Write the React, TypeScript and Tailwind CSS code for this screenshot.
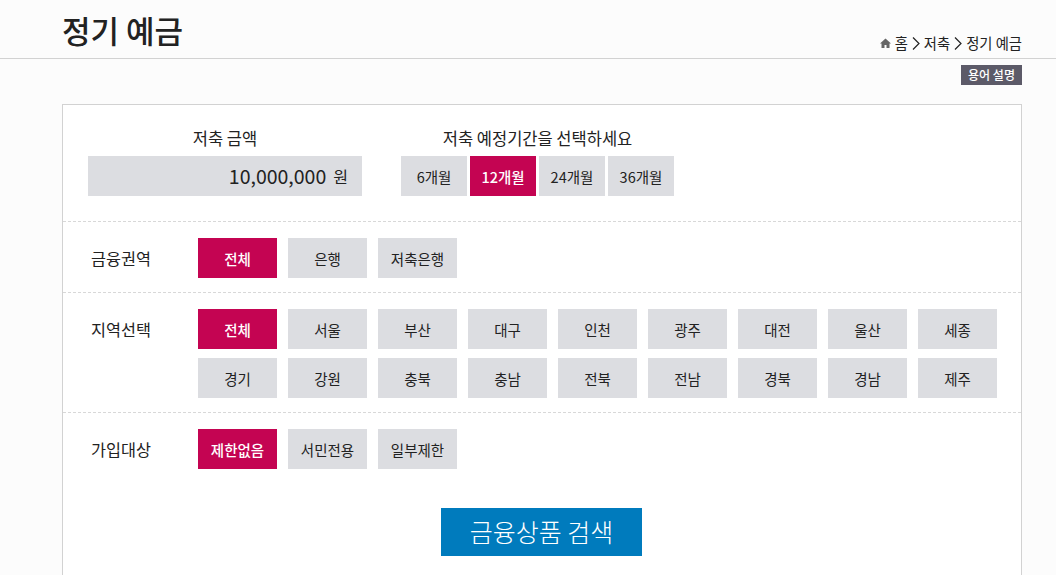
const KR = "font-['Noto_Sans_CJK_KR','Liberation_Sans',sans-serif]";

const PERIODS = ["6개월", "12개월", "24개월", "36개월"];
const AREAS = ["전체", "은행", "저축은행"];
const REGIONS = ["전체", "서울", "부산", "대구", "인천", "광주", "대전", "울산", "세종", "경기", "강원", "충북", "충남", "전북", "전남", "경북", "경남", "제주"];
const TARGETS = ["제한없음", "서민전용", "일부제한"];

function Chip({ label, active }: { label: string; active?: boolean }) {
  return (
    <button
      className={`h-10 w-[79px] pt-[1px] text-[14.5px] ${active ? "bg-[#c40452] font-medium text-white" : "bg-[#dcdde1] text-[#222]"}`}
    >
      {label}
    </button>
  );
}

function Crumb() {
  return (
    <svg width="8" height="13" viewBox="0 0 8 13" className="mx-[4px]">
      <path d="M1 0.5 L7 6.5 L1 12.5" fill="none" stroke="#222" strokeWidth="1.2" />
    </svg>
  );
}

function FilterRow({ title, items, className }: { title: string; items: string[]; className: string }) {
  return (
    <div className={`flex border-b border-dashed border-[#d8d8d8] pl-[28px] ${className}`}>
      <div className="flex h-10 w-[107px] shrink-0 items-center pt-[1px] text-[16.3px] text-[#222]">{title}</div>
      <div className="flex w-[810px] flex-wrap content-start gap-x-[11px] gap-y-[9px]">
        {items.map((item, i) => (
          <Chip key={item} label={item} active={i === 0} />
        ))}
      </div>
    </div>
  );
}

export default function App() {
  return (
    <div className={`h-[575px] overflow-hidden bg-[#fcfcfc] ${KR}`}>
      {/* Header */}
      <header className="h-[59px] border-b border-[#d2d2d2]">
        <div className="ml-[62px] flex h-[58px] w-[960px] items-start justify-between">
          <h1 className="mt-[7px] text-[31px] leading-[45px] font-medium text-[#222]">정기 예금</h1>
          <div className="mt-[33px] flex h-5 items-center text-[14.3px] text-[#222]">
            <svg width="11" height="10" viewBox="0 0 11 10" className="mr-[4px]">
              <path d="M5.5 0.5 L11 5.5 H9.5 V10 H6.5 V7 H4.5 V10 H1.5 V5.5 H0 Z" fill="#666" />
            </svg>
            <span>홈</span>
            <Crumb />
            <span>저축</span>
            <Crumb />
            <span>정기 예금</span>
          </div>
        </div>
      </header>

      <div className="ml-[62px] w-[960px]">
        <div className="mt-[6px] flex justify-end">
          <button className="h-5 w-[61px] bg-[#5c5a68] text-xs font-medium text-white">용어 설명</button>
        </div>

        {/* Panel */}
        <div className="mt-[19px] h-[600px] border border-[#d2d2d2] bg-white">
          <div className="flex h-[117px] border-b border-dashed border-[#d8d8d8] pl-[25px]">
            <div className="w-[274px]">
              <div className="mt-[21px] h-[30px] text-center text-[16.5px] leading-6 text-[#222]">저축 금액</div>
              <div className="flex h-10 items-center justify-end bg-[#dcdde1] pr-[14px] text-[#222]">
                <span className="text-[19.5px]">10,000,000</span>
                <span className="ml-[7px] text-base">원</span>
              </div>
            </div>
            <div className="ml-[39px]">
              <div className="mt-[21px] h-[30px] w-[273px] text-center text-[16.5px] leading-6 whitespace-nowrap text-[#222]">
                저축 예정기간을 선택하세요
              </div>
              <div className="flex gap-[3px]">
                {PERIODS.map((p, i) => (
                  <button
                    key={p}
                    className={`h-10 w-[66px] pt-[1px] text-[14.5px] ${i === 1 ? "bg-[#c40452] font-medium text-white" : "bg-[#dcdde1] text-[#222]"}`}
                  >
                    {p}
                  </button>
                ))}
              </div>
            </div>
          </div>

          <FilterRow title="금융권역" items={AREAS} className="h-[71px] pt-[16px]" />
          <FilterRow title="지역선택" items={REGIONS} className="h-[120px] pt-[16px]" />

          <div className="flex pt-[16px] pl-[28px]">
            <div className="flex h-10 w-[107px] shrink-0 items-center pt-[1px] text-[16.3px] text-[#222]">가입대상</div>
            <div className="flex gap-x-[11px]">
              {TARGETS.map((t, i) => (
                <Chip key={t} label={t} active={i === 0} />
              ))}
            </div>
          </div>

          <div className="mt-[39px] flex justify-center pr-[1px]">
            <button className="h-12 w-[201px] bg-[#007bbd] text-[25px] font-light text-white">금융상품 검색</button>
          </div>
        </div>
      </div>
    </div>
  );
}
